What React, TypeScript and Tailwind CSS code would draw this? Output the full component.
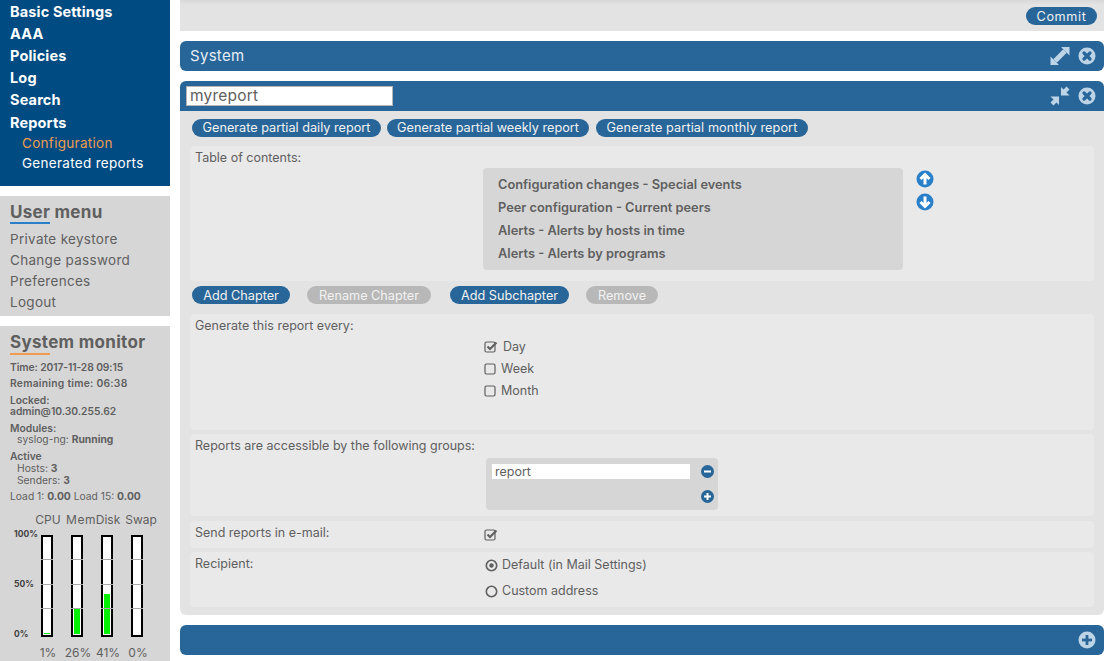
const CloseIcon = () => (
  <svg width="18" height="18" viewBox="0 0 18 18">
    <circle cx="9" cy="9" r="8.500" fill="#bdd4e7" />
    <path d="M6 6l6 6M12 6l-6 6" stroke="#286699" strokeWidth="3.200" strokeLinecap="round" />
  </svg>
);

const ExpandIcon = () => (
  <svg width="20" height="20" viewBox="0 0 20 20" fill="#bdd4e7">
    <path d="M11 1H19.500V9.500Z" />
    <path d="M9 19H0.500V10.500Z" />
    <path d="M5 15L15 5" stroke="#bdd4e7" strokeWidth="5" />
  </svg>
);

const CompressIcon = () => (
  <svg width="20" height="20" viewBox="0 0 20 20" fill="#bdd4e7">
    <path d="M11 9.500V1L19.500 9.500Z" />
    <path d="M9 10.500V19L0.500 10.500Z" />
    <path d="M13.500 6.500L18 2M6.500 13.500L2 18" stroke="#bdd4e7" strokeWidth="4.200" />
  </svg>
);

const CircleArrow = ({ up }: { up?: boolean }) => (
  <svg width="18" height="18" viewBox="0 0 18 18">
    <circle cx="9" cy="9" r="8.500" fill="#2a7fc9" />
    <path
      d={up ? "M9 14.500V5M4.500 9L9 4.500l4.500 4.500" : "M9 3.500V13M4.500 9L9 13.500l4.500-4.500"}
      stroke="#fff"
      strokeWidth="3"
      fill="none"
    />
  </svg>
);

const SmallSign = ({ plus }: { plus?: boolean }) => (
  <svg width="13" height="13" viewBox="0 0 13 13">
    <circle cx="6.500" cy="6.500" r="6.500" fill="#286699" />
    <rect x="3" y="5.500" width="7" height="2" fill="#fff" />
    {plus && <rect x="5.500" y="3" width="2" height="7" fill="#fff" />}
  </svg>
);

const PlusIcon = () => (
  <svg width="18" height="18" viewBox="0 0 18 18">
    <circle cx="9" cy="9" r="8.500" fill="#bdd4e7" />
    <rect x="4" y="7.600" width="10" height="2.800" fill="#286699" />
    <rect x="7.600" y="4" width="2.800" height="10" fill="#286699" />
  </svg>
);

const Check = ({ checked }: { checked?: boolean }) => (
  <svg width="14" height="14" viewBox="0 0 14 14" className="shrink-0">
    <rect x="1" y="2" width="10" height="10" rx="1.500" fill="none" stroke="#5f5f5f" strokeWidth="1.200" />
    {checked && <path d="M3.500 6.500l2.500 2.500L12.500 2.500" fill="none" stroke="#5f5f5f" strokeWidth="2" />}
  </svg>
);

const Radio = ({ checked }: { checked?: boolean }) => (
  <svg width="13" height="13" viewBox="0 0 13 13" className="shrink-0">
    <circle cx="6.500" cy="6.500" r="5.200" fill="none" stroke="#5f5f5f" strokeWidth="1.600" />
    {checked && <circle cx="6.500" cy="6.500" r="2.200" fill="#5f5f5f" />}
  </svg>
);

const Pill = ({ children, off, className }: { children: string; off?: boolean; className: string }) => (
  <button
    className={`h-[18px] shrink-0 rounded-full text-[12.7px] leading-[18px] text-center whitespace-nowrap text-[#f2f2f2] ${
      off ? "bg-[#b8b8b8]" : "bg-[#286699]"
    } ${className}`}
  >
    {children}
  </button>
);

const Meter = ({ name, pct, level, labelClass }: { name: string; pct: string; level: number; labelClass: string }) => (
  <div className="w-[30px] flex flex-col items-center">
    <div className={`h-[18px] text-[12px] leading-[18px] whitespace-nowrap ${labelClass}`}>{name}</div>
    <div className="relative w-[12px] h-[102px] mt-[6px] bg-white border-2 border-black flex flex-col justify-end p-[1px]">
      <div className="bg-[#00f000] w-full" style={{ height: `${level}px` }} />
      <div className="absolute left-[-2px] right-[-2px] top-[22px] h-[1px] bg-[#a8a8a8]" />
      <div className="absolute left-[-2px] right-[-2px] top-[47px] h-[1px] bg-[#a8a8a8]" />
      <div className="absolute left-[-2px] right-[-2px] top-[71px] h-[1px] bg-[#a8a8a8]" />
    </div>
    <div className="mt-[8px] ml-[2px] text-[12px] leading-[16px] whitespace-nowrap">{pct}</div>
  </div>
);

const Row = ({ className, children }: { className?: string; children: React.ReactNode }) => (
  <div className={`mx-[10px] bg-[#e9e9e9] rounded-[4px] flex text-[12.5px] ${className ?? ""}`}>{children}</div>
);

const Label = ({ children }: { children: string }) => (
  <div className="w-[293px] shrink-0 pl-[5px] whitespace-nowrap">{children}</div>
);

export default function App() {
  return (
    <div
      className="w-[1104px] h-[661px] overflow-hidden bg-white flex gap-[10px] text-[#5f5f5f]"
      style={{ fontFamily: 'Inter, "Open Sans", sans-serif' }}
    >
      <aside className="w-[170px] shrink-0 flex flex-col gap-[10px]">
        <nav className="h-[186px] bg-[#004b82] pl-[10px] pt-[1px] text-white">
          {["Basic Settings", "AAA", "Policies", "Log", "Search"].map((t) => (
            <div key={t} className="h-[22px] leading-[22px] text-[14.5px] tracking-[0.15px] font-bold">{t}</div>
          ))}
          <div className="h-[23px] leading-[23px] text-[14.5px] tracking-[0.15px] font-bold">Reports</div>
          <div className="pl-[12px] h-[20px] leading-[19px] text-[13.5px] tracking-[0.3px] text-[#f09c50]">Configuration</div>
          <div className="pl-[12px] h-[20px] leading-[19px] text-[13.5px] tracking-[0.3px]">Generated reports</div>
        </nav>

        <section className="h-[120px] bg-[#d6d6d6] pl-[10px] pt-[7px]">
          <h2 className="h-[19px] text-[17px] leading-[18px] tracking-[0.3px] font-bold">User menu</h2>
          <div className="w-[40px] h-[2px] bg-[#2a7fc9] mb-[5px]" />
          {["Private keystore", "Change password", "Preferences", "Logout"].map((t) => (
            <div key={t} className="h-[21px] leading-[21px] text-[13.5px] tracking-[0.3px]">{t}</div>
          ))}
        </section>

        <section className="flex-1 bg-[#d6d6d6] pl-[10px] pt-[7px] text-[10.3px] leading-[11px]">
          <h2 className="h-[20px] text-[17px] leading-[18px] tracking-[0.3px] font-bold">System monitor</h2>
          <div className="w-[40px] h-[2px] bg-[#f09c50] mb-[7px]" />
          <div className="font-semibold mb-[5px] tracking-[-0.1px]">Time: 2017-11-28 09:15</div>
          <div className="font-semibold mb-[6px] tracking-[0.25px]">Remaining time: 06:38</div>
          <div className="font-semibold mb-[6px]">Locked:<br />admin@10.30.255.62</div>
          <div className="font-semibold">Modules:</div>
          <div className="pl-[7px] mb-[6px]">syslog-ng: <b>Running</b></div>
          <div className="font-semibold">Active</div>
          <div className="pl-[7px] leading-[12px]">Hosts: <b>3</b></div>
          <div className="pl-[7px] leading-[12px] mb-[5px]">Senders: <b>3</b></div>
          <div>Load 1: <b>0.00</b> Load 15: <b>0.00</b></div>
          <div className="flex mt-[9px]">
            <div className="w-[29px] relative h-[120px] text-[8.5px] font-bold text-[#404040] -ml-[6px] mr-[2px]">
              <div className="absolute left-[10px] top-[18px]">100%</div>
              <div className="absolute left-[10px] top-[68px]">50%</div>
              <div className="absolute left-[10px] top-[118px]">0%</div>
            </div>
            <div className="flex -ml-[3px]">
              <Meter name="CPU" pct="1%" level={1} labelClass="ml-[2px]" />
              <Meter name="Mem" pct="26%" level={25} labelClass="ml-[8px] tracking-[0.5px]" />
              <Meter name="Disk" pct="41%" level={40} labelClass="ml-[2px]" />
              <Meter name="Swap" pct="0%" level={0} labelClass="ml-[8px]" />
            </div>
          </div>
        </section>
      </aside>

      <main className="flex-1 flex flex-col gap-[10px] min-w-0">
        <div className="h-[31px] bg-gradient-to-b from-[#d8d8d8] to-[#e3e3e3] to-[15%] flex items-start justify-end pr-[7px] pt-[7px]">
          <Pill className="w-[71px] pt-[1px] tracking-[0.6px]">Commit</Pill>
        </div>

        <div className="h-[30px] bg-[#286699] rounded-[6px] flex items-center pl-[10px] pr-[8px] text-[15px] tracking-[0.3px] text-[#e6eef5]">
          <span className="flex-1">System</span>
          <span className="flex items-center gap-[8px]"><ExpandIcon /><CloseIcon /></span>
        </div>

        <div className="h-[534px] bg-[#e3e3e3] rounded-[6px] flex flex-col">
          <div className="h-[30px] shrink-0 bg-[#286699] rounded-t-[6px] flex items-center pl-[6px] pr-[8px]">
            <input
              readOnly
              value="myreport"
              className="w-[207px] h-[20px] bg-white border border-[#b5b5b5] pl-[3px] text-[15.500px] tracking-[0.2px] text-[#5f5f5f] outline-none"
            />
            <span className="flex-1" />
            <span className="flex items-center gap-[8px]"><CompressIcon /><CloseIcon /></span>
          </div>

          <div className="flex pl-[12px] mt-[8px]">
            <Pill className="w-[189px]">Generate partial daily report</Pill>
            <Pill className="w-[202px] ml-[6px]">Generate partial weekly report</Pill>
            <Pill className="w-[212px] ml-[7px] tracking-[0.1px]">Generate partial monthly report</Pill>
          </div>

          <Row className="h-[135px] mt-[9px] pt-[3px]">
            <Label>Table of contents:</Label>
            <div className="w-[420px] h-[102px] mt-[19px] bg-[#d6d6d6] rounded-[4px] pl-[15px] pt-[5px] font-semibold text-[12.8px]">
              {[
                "Configuration changes - Special events",
                "Peer configuration - Current peers",
                "Alerts - Alerts by hosts in time",
                "Alerts - Alerts by programs",
              ].map((t) => (
                <div key={t} className="h-[23px] leading-[23px] whitespace-nowrap">{t}</div>
              ))}
            </div>
            <div className="ml-[13px] mt-[21px] flex flex-col gap-[5px]">
              <CircleArrow up />
              <CircleArrow />
            </div>
          </Row>

          <div className="flex pl-[12px] mt-[5px]">
            <Pill className="w-[98px] pt-[1px]">Add Chapter</Pill>
            <Pill off className="w-[124px] ml-[17px] pt-[1px]">Rename Chapter</Pill>
            <Pill className="w-[119px] ml-[19px] pt-[1px]">Add Subchapter</Pill>
            <Pill off className="w-[72px] ml-[17px] pt-[1px]">Remove</Pill>
          </div>

          <Row className="h-[116px] mt-[10px] pt-[3px]">
            <Label>Generate this report every:</Label>
            <div className="mt-[19px] ml-[1px]">
              <div className="h-[22px] flex items-center gap-[5px]"><Check checked /><span>Day</span></div>
              <div className="h-[22px] flex items-center gap-[3px]"><Check /><span>Week</span></div>
              <div className="h-[22px] flex items-center gap-[3px]"><Check /><span>Month</span></div>
            </div>
          </Row>

          <Row className="h-[82px] mt-[4px] pt-[3px]">
            <Label>Reports are accessible by the following groups:</Label>
            <div className="w-[232px] h-[52px] mt-[21px] ml-[3px] bg-[#d6d6d6] rounded-[4px] pl-[6px] pt-[6px] pr-[4px]">
              <div className="flex items-center justify-between">
                <div className="w-[198px] h-[15px] bg-white pl-[3px] leading-[15px]">report</div>
                <SmallSign />
              </div>
              <div className="flex justify-end mt-[11px]"><SmallSign plus /></div>
            </div>
          </Row>

          <Row className="h-[27px] mt-[5px] pt-[3px]">
            <Label>Send reports in e-mail:</Label>
            <div className="mt-[4px] ml-[1px]"><Check checked /></div>
          </Row>

          <Row className="h-[55px] mt-[4px] pt-[3px]">
            <Label>Recipient:</Label>
            <div className="ml-[2px]">
              <div className="h-[20px] flex items-center gap-[4px]"><Radio checked /><span>Default (in Mail Settings)</span></div>
              <div className="h-[20px] mt-[6px] flex items-center gap-[4px]"><Radio /><span>Custom address</span></div>
            </div>
          </Row>
        </div>

        <div className="h-[30px] bg-[#286699] rounded-[6px] flex items-center justify-end pr-[8px]">
          <PlusIcon />
        </div>
      </main>
    </div>
  );
}
